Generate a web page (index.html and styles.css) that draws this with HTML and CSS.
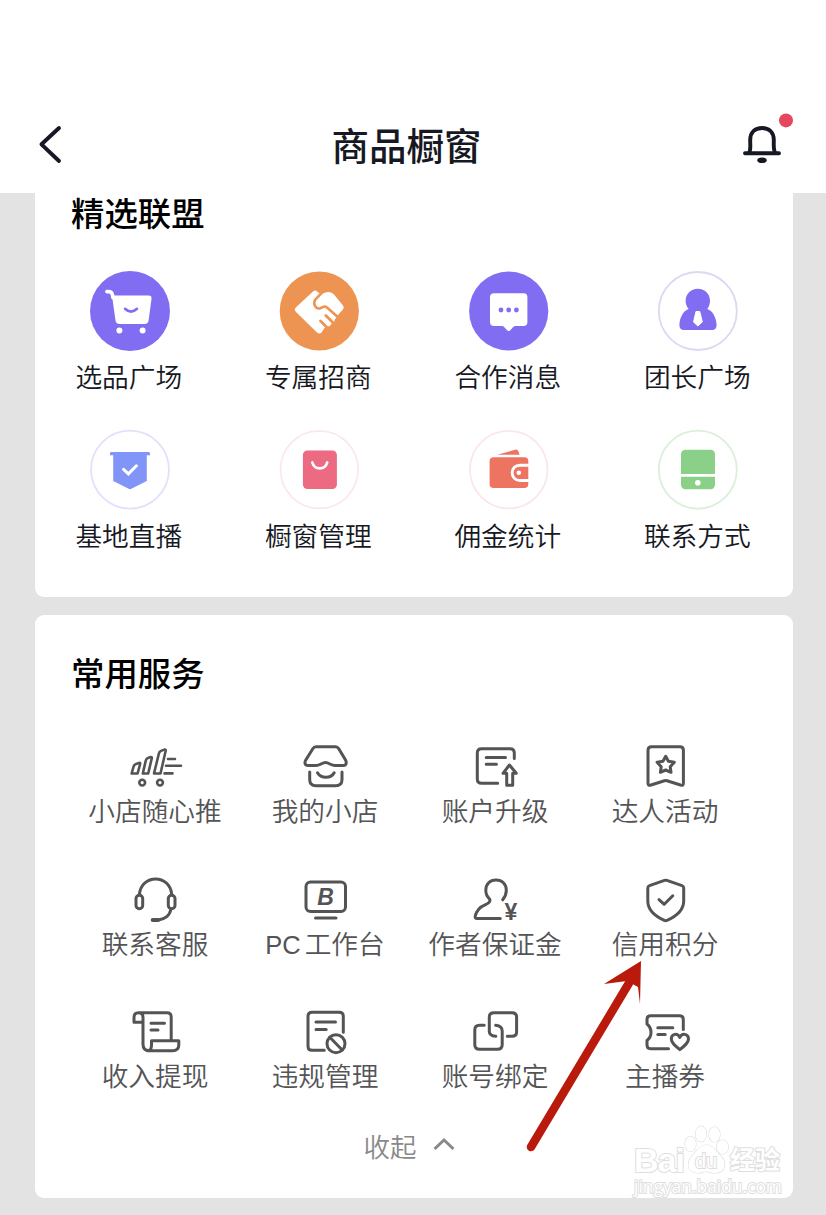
FILE: index.html
```html
<!DOCTYPE html>
<html lang="zh-CN">
<head>
<meta charset="UTF-8">
<meta name="viewport" content="width=device-width, initial-scale=1.0">
<title>商品橱窗</title>
<link rel="stylesheet" href="styles.css">
</head>
<body>

<!-- Header -->
<div class="header">
  <svg class="back" width="60" height="60" viewBox="20 114 60 60"><path d="M59 128L41.5 144.3L59 161"/></svg>
  <h1>商品橱窗</h1>
  <svg class="bell" width="60" height="60" viewBox="736 114 60 60">
    <path d="M745 153.3H779M749 153C751 150 750.2 147 750.2 140C750.2 132.5 755 128 762 128C769 128 773.8 132.5 773.8 140C773.8 147 773.3 150 775.3 153"/>
    <ellipse class="clapper" cx="762" cy="160.2" rx="4.7" ry="2.8"/>
    <circle class="dot" cx="786" cy="120.4" r="7"/>
  </svg>
</div>

<!-- Alliance -->
<div class="card alliance">
  <h2>精选联盟</h2>
  <div class="alliance-grid">
    <div class="item">
      <svg width="80" height="80" viewBox="0 0 80 80">
        <circle cx="40" cy="40" r="40" fill="#806df2"/>
        <path d="M17 20.6C21 20.4 22.4 21 23 26.5" fill="none" stroke="#fff" stroke-width="3.8" stroke-linecap="round"/>
        <path d="M22 24.6H58.5Q62 24.6 61.5 28L58.6 49.5Q58 53 54.5 53H30Q26 53 25.5 49.5Z" fill="#fff"/>
        <path d="M35 37.8Q41 43.4 47 37.8" fill="none" stroke="#806df2" stroke-width="2.6" stroke-linecap="round"/>
        <circle cx="29.4" cy="59.4" r="3" fill="#fff"/><circle cx="52.6" cy="59.4" r="3" fill="#fff"/>
      </svg>
      <span>选品广场</span>
    </div>
    <div class="item">
      <svg width="80" height="80" viewBox="0 0 80 80">
        <circle cx="40.3" cy="40" r="39.6" fill="#ee9452"/>
        <path d="M34 20.5Q36.5 18.5 38.5 21L42 23L47.5 21.3Q52 20 55 23.5L64 34.5Q65.5 37 63.5 39L58.5 44.5L55.5 49Q55.5 52.5 52 53Q51.5 55.5 48.5 55.5L45.5 57L42.5 61.5Q40.5 63.5 38 61.5L17 41Q14.5 38.5 17 36.2Z" fill="#fff"/>
        <path d="M44.5 20L36.2 28.7C34 32 36 38 40.5 37.5C44 37 45 33.5 48 36.5L60.5 47.5" fill="none" stroke="#ee9452" stroke-width="2.6"/>
        <path d="M41.5 50L49 57.5M46.8 44.6L55.5 53.3" fill="none" stroke="#ee9452" stroke-width="2.8" stroke-linecap="round"/>
      </svg>
      <span>专属招商</span>
    </div>
    <div class="item">
      <svg width="80" height="80" viewBox="0 0 80 80">
        <circle cx="39.7" cy="40" r="39.6" fill="#806df2"/>
        <path d="M25 22.3H54.5Q58.4 22.3 58.4 26.2V51Q58.4 55 54.5 55H46.5Q45 55 44 56.2L41 59.5Q39.7 60.7 38.4 59.5L35.3 56.2Q34.3 55 33 55H25Q21 55 21 51V26.2Q21 22.3 25 22.3Z" fill="#fff"/>
        <circle cx="32" cy="39" r="2.4" fill="#806df2"/><circle cx="39.7" cy="39" r="2.4" fill="#806df2"/><circle cx="47.4" cy="39" r="2.4" fill="#806df2"/>
      </svg>
      <span>合作消息</span>
    </div>
    <div class="item">
      <svg width="80" height="80" viewBox="0 0 80 80">
        <circle cx="39.8" cy="40" r="39" fill="#fff" stroke="#dcd8f2" stroke-width="1.8"/>
        <path d="M39.8 17.7C47 17.7 52 23 52 29.8C52 33 51 36 49.3 38C55 40 58.4 47 58.6 54Q58.6 59 54 59H26Q21.4 59 21.4 54C21.6 47 25 40 30.6 38C28.8 36 27.6 33 27.6 29.8C27.6 23 33 17.7 39.8 17.7Z" fill="#806df2"/>
        <path d="M38 40.5H41.8L44.3 51L39.9 55L35.5 51Z" fill="#fff" stroke="#fff" stroke-linejoin="round"/>
      </svg>
      <span>团长广场</span>
    </div>
    <div class="item">
      <svg width="80" height="80" viewBox="0 0 80 80">
        <circle cx="40" cy="39.6" r="39" fill="#fff" stroke="#dfe2fa" stroke-width="1.8"/>
        <path d="M20 25.2V23.5Q20 22 21.2 22H58.8Q60 22 60 23.5V25.2H56.8V50.9L40.8 59Q40 59.3 39.2 59L23.2 50.9V25.2Z" fill="#8195f8"/>
        <path d="M33.6 39.4L38.4 43.9L46.4 35.8" fill="none" stroke="#fff" stroke-width="3" stroke-linecap="round"/>
      </svg>
      <span>基地直播</span>
    </div>
    <div class="item">
      <svg width="80" height="80" viewBox="0 0 80 80">
        <circle cx="40.3" cy="39.6" r="38.8" fill="#fff" stroke="#fbe8ec" stroke-width="1.8"/>
        <rect x="23.9" y="20.5" width="34" height="38.5" rx="4.5" fill="#ec6a82"/>
        <path d="M33.3 32.5C35.5 40.3 46 40.3 48.2 32.5" fill="none" stroke="#fff" stroke-width="2.7" stroke-linecap="round"/>
      </svg>
      <span>橱窗管理</span>
    </div>
    <div class="item">
      <svg width="80" height="80" viewBox="0 0 80 80">
        <circle cx="39.7" cy="39.6" r="38.8" fill="#fff" stroke="#fbe6e8" stroke-width="1.8"/>
        <path d="M28.3 24.8L46 19.7Q48.5 19.1 49.5 21.5L50.6 24.8Z" fill="#ec7461"/>
        <rect x="20.6" y="27.3" width="38.7" height="30.6" rx="4" fill="#ec7461"/>
        <path d="M60 35.2H51C40.5 35.2 40.5 50.5 51 50.5H60" fill="none" stroke="#fff" stroke-width="2.9"/>
        <circle cx="49.8" cy="42.8" r="2.3" fill="#fff"/>
      </svg>
      <span>佣金统计</span>
    </div>
    <div class="item">
      <svg width="80" height="80" viewBox="0 0 80 80">
        <circle cx="39.8" cy="39.6" r="39" fill="#fff" stroke="#daf0da" stroke-width="1.8"/>
        <rect x="23" y="19.8" width="34" height="39.4" rx="4.5" fill="#8bd089"/>
        <path d="M22 45.3H58" stroke="#fff" stroke-width="2.8"/>
        <circle cx="39.8" cy="52.8" r="2.8" fill="#fff"/>
      </svg>
      <span>联系方式</span>
    </div>
  </div>
</div>

<!-- Common services -->
<div class="card services">
  <h2>常用服务</h2>
  <div class="service-grid">
    <div class="service">
      <svg width="60" height="50" viewBox="0 0 60 50" class="thin">
        <path d="M6.6 31.5L8.6 24.5Q9.2 22.6 11 22L14 20.9Q15.4 20.6 15.1 22L12.6 31.5ZM17.8 31.5L20.8 18.5Q21.3 16.6 23 16L25.6 15.1Q27 14.8 26.8 16.2L23.2 31.5ZM29 31.5L33.9 11.5Q34.4 9.6 36 8.9L39.4 7.6Q41 7.2 40.7 8.8L35.5 31.5Z"/>
        <path d="M43 17H50M41 23.7H56M39.5 31.4H47.5"/>
        <circle cx="17.2" cy="40.6" r="2.9"/><circle cx="35" cy="40.6" r="2.9"/>
      </svg>
      <span>小店随心推</span>
    </div>
    <div class="service">
      <svg width="60" height="50" viewBox="0 0 60 50">
        <path d="M21 4.8H40.5Q42.5 4.8 43.8 6.8L50.8 18.5Q52.5 23.6 47.5 23.6H40C36 23.6 34 20.6 30.6 20.6C27 20.6 25 23.6 21 23.6H14Q8.5 23.6 10.5 18.5L17.8 6.8Q19 4.8 21 4.8Z"/>
        <path d="M14.7 30V37.5Q14.7 43.8 21 43.8H40.5Q47 43.8 47 37.5V30M22.5 30.8C26 36.8 36 36.8 39.2 30.8"/>
      </svg>
      <span>我的小店</span>
    </div>
    <div class="service">
      <svg width="60" height="50" viewBox="0 0 60 50">
        <path d="M32.7 41.3H16.5Q12.3 41.3 12.3 37V11Q12.3 6.8 16.5 6.8H45Q49.3 6.8 49.3 11V16.5M21.2 15.6H40.5M21.2 22.3H31.4"/>
        <path d="M44.4 23L38 31.3H41.7V43.2H47.7V31.3H51.3Z"/>
      </svg>
      <span>账户升级</span>
    </div>
    <div class="service">
      <svg width="60" height="50" viewBox="0 0 60 50">
        <path d="M16.5 4.8H45Q48.4 4.8 48.4 8.2V41Q48.4 44.3 45.5 43L32 38.8Q30.7 38.4 29.4 38.8L16 43Q13 44.3 13 41V8.2Q13 4.8 16.5 4.8Z"/>
        <path d="M30.7 14.3L33.4 19.2L39.3 20.2L35.2 24.7L36 30.3L30.7 28L25.4 30.3L26.2 24.7L22.1 20.2L28 19.2Z"/>
      </svg>
      <span>达人活动</span>
    </div>
    <div class="service">
      <svg width="60" height="50" viewBox="0 0 60 50">
        <path d="M14.4 19.5C16 -1.3 45.2 -1.3 46.7 19.5M46 34C44.5 41 40.5 43.5 33.5 45"/>
        <path d="M27.7 45H33" class="mic"/>
        <rect x="11" y="20.3" width="6.7" height="13.4" rx="3.2"/><rect x="43.3" y="20.3" width="6.7" height="13.4" rx="3.2"/>
      </svg>
      <span>联系客服</span>
    </div>
    <div class="service">
      <svg width="60" height="50" viewBox="0 0 60 50">
        <rect x="11" y="7" width="39.5" height="29.4" rx="4.5"/>
        <path d="M20.5 43H41"/>
        <text x="30.5" y="29.6">B</text>
      </svg>
      <span><span class="latin">PC</span>工作台</span>
    </div>
    <div class="service">
      <svg width="60" height="50" viewBox="0 0 60 50">
        <path d="M37.7 24.8C40 22 41.3 19 41.3 15.5C41.3 9 37 4.9 31 4.9C25 4.9 20.8 9 20.8 15.5C20.8 19 22.5 22 24.6 24C26 27 23 28.5 20 29.8C14.5 32 11.5 36 10.2 41Q9.7 43.4 12 43.4H35.3"/>
        <text class="yen" x="46" y="45.3">¥</text>
      </svg>
      <span>作者保证金</span>
    </div>
    <div class="service">
      <svg width="60" height="50" viewBox="0 0 60 50">
        <path d="M29.5 5.4Q30.7 5 31.9 5.4L47 10.6Q48.7 11.2 48.7 13V26C48.7 34 43.5 40.3 32 45.4Q30.7 46 29.4 45.4C18 40.3 12.8 34 12.8 26V13Q12.8 11.2 14.5 10.6Z"/>
        <path d="M24 24.6L29.2 29.3L37.8 20.8"/>
      </svg>
      <span>信用积分</span>
    </div>
    <div class="service">
      <svg width="60" height="50" viewBox="0 0 60 50">
        <path d="M17.5 15.2H9V10.5Q9 5.7 13.5 5.7H42Q46.2 5.7 46.2 10V32.5M13.5 5.7Q18 5.7 18 10.5V37Q18 43.7 24 43.7H47.5Q53.8 43.7 53.8 38V33.8H26.5V38Q26.5 43.7 22.5 43.7M26 16.3H39.5M26 23H33"/>
      </svg>
      <span>收入提现</span>
    </div>
    <div class="service">
      <svg width="60" height="50" viewBox="0 0 60 50">
        <path d="M29.3 43.3H17Q13 43.3 13 39.3V9.3Q13 5.3 17 5.3H44.3Q48.3 5.3 48.3 9.3V25.3M21 15H40.5M21 22.6H31.2"/>
        <circle cx="41" cy="36.7" r="9"/><path d="M34.8 30.3L47.2 43"/>
      </svg>
      <span>违规管理</span>
    </div>
    <div class="service">
      <svg width="60" height="50" viewBox="0 0 60 50">
        <path d="M42.3 29.3H47Q51.6 29.3 51.6 25V10Q51.6 5.7 47 5.7H29Q24.3 5.7 24.3 10V24.5Q24.3 28.7 30.8 29.3"/>
        <path d="M19.2 18.3H14.5Q9.8 18.3 9.8 23V37.7Q9.8 42.2 14.5 42.2H32.5Q37.2 42.2 37.2 37.7V24Q37.2 19 30.7 18.3"/>
      </svg>
      <span>账号绑定</span>
    </div>
    <div class="service">
      <svg width="60" height="50" viewBox="0 0 60 50">
        <path d="M33.5 41.7H15.5Q12 41.7 12 38V33.5C14.5 31.5 16 29 16 25.5C16 22 14.5 19 12 17V12.5Q12 8.8 15.5 8.8H44.5Q48.3 8.8 48.3 12.5V22.5M22.8 20.8H37.8M22.8 27.5H30.2"/>
        <path d="M44.8 42.6C40 38.8 36.3 35.8 36.3 32C36.3 26.5 42.5 25.7 44.8 30.4C47 25.7 53.5 26.5 53.5 32C53.5 35.8 49.6 38.8 44.8 42.6Z"/>
      </svg>
      <span>主播券</span>
    </div>
  </div>
  <div class="collapse">
    <span>收起</span>
    <svg width="24" height="16" viewBox="0 0 24 16"><path d="M2.5 13L12 4L21.5 13"/></svg>
  </div>
</div>

<!-- Pointer to the credit score entry -->
<svg class="pointer" width="130" height="200" viewBox="520 956 130 200">
  <path d="M531 1147L629 983" stroke="#b91a0c" stroke-width="8.5" stroke-linecap="round"/>
  <path d="M641 961L604 984L627 981L638 987L640 1004Z" fill="#b91a0c"/>
</svg>

<!-- Watermark -->
<div class="watermark">
  <div class="brand">
    <span class="bai">Bai</span>
    <span class="paw">
      <svg width="46" height="50" viewBox="0 0 46 50">
        <ellipse cx="6.5" cy="19" rx="5.5" ry="7.5"/><ellipse cx="17" cy="9" rx="5.5" ry="7.8"/>
        <ellipse cx="30.5" cy="9.5" rx="5.5" ry="7.5"/><ellipse cx="38.5" cy="22" rx="5.8" ry="7"/>
        <path d="M22.5 20C29 20 32 26 36 30C44 38 41 48 31 48C27 48 25 46.5 22 46.5C19 46.5 17 48 13 48C3 47 2 37 9 30C13 26 16 20 22.5 20Z"/>
      </svg>
      <span class="du">du</span>
    </span>
    <span class="jy">经验</span>
  </div>
  <div class="site">jingyan.baidu.com</div>
</div>

</body>
</html>
```
FILE: styles.css
```css
* {
  box-sizing: border-box;
}
body {
  position: relative;
  margin: 0;
  min-height: 1215px;
  background-color: #e3e3e3;
  font-family: "Noto Sans CJK SC", sans-serif;
  color: #161823;
}
svg {
  display: block;
  flex: none;
  overflow: visible;
}
h1, h2 {
  margin: 0;
  font-weight: 500;
}

/* header */
.header {
  display: flex;
  justify-content: space-between;
  height: 193px;
  padding: 114px 30px 0 20px;
  background-color: #fff;
}
.header h1 {
  padding-right: 3px;
  font-size: 37.5px;
  line-height: 59px;
}
.back, .bell {
  fill: none;
  stroke: #161823;
  stroke-width: 3.9;
  stroke-linecap: round;
  stroke-linejoin: round;
}
.bell .clapper {
  fill: #161823;
  stroke: none;
}
.bell .dot {
  fill: #e5475f;
  stroke: none;
}

/* cards */
.card {
  width: 758px;
  margin-left: 35px;
  background-color: #fff;
}
.card h2 {
  padding-left: 36px;
  font-size: 33.4px;
  line-height: 38px;
  color: #000;
}
.alliance {
  height: 404px;
  border-radius: 0 0 9px 9px;
}
.alliance-grid {
  display: grid;
  grid-template-columns: repeat(4, 1fr);
  grid-auto-rows: 158.5px;
  padding-top: 40px;
}
.item {
  display: flex;
  flex-direction: column;
  align-items: center;
}
.item span {
  margin-top: 5px;
  padding-right: 2px;
  font-size: 26.7px;
  font-weight: 350;
  line-height: 40px;
}

.services {
  height: 583px;
  margin-top: 18px;
  padding-top: 38px;
  border-radius: 9px;
}
.service-grid {
  display: grid;
  grid-template-columns: repeat(4, 170px);
  grid-auto-rows: 132.5px;
  padding: 51px 0 0 35px;
}
.service {
  display: flex;
  flex-direction: column;
  align-items: center;
}
.service svg {
  fill: none;
  stroke: #545456;
  stroke-width: 3;
  stroke-linecap: round;
  stroke-linejoin: round;
}
.service .thin {
  stroke-width: 2.6;
}
.service .mic {
  stroke-width: 4;
}
.service text {
  fill: #545456;
  stroke: none;
  font: italic bold 23px "Liberation Sans", sans-serif;
  text-anchor: middle;
}
.service .yen {
  font: bold 23px "Liberation Sans", sans-serif;
}
.service > span {
  margin-top: -1px;
  font-size: 26.7px;
  font-weight: 350;
  line-height: 38px;
  color: #545456;
}
.latin {
  margin-right: 4px;
  font-family: "Liberation Sans", sans-serif;
  font-size: 25.5px;
}
.collapse {
  display: flex;
  justify-content: center;
  align-items: center;
  gap: 15px;
  padding-right: 9px;
  margin-top: -14px;
  font-size: 26.5px;
  font-weight: 350;
  line-height: 40px;
  color: #898989;
}
.collapse svg {
  margin-top: -3px;
  fill: none;
  stroke: #898989;
  stroke-width: 3;
}

/* overlays */
.pointer {
  position: absolute;
  left: 520px;
  top: 956px;
  fill: none;
}
.watermark {
  position: absolute;
  left: 634px;
  top: 1125px;
  width: 150px;
  color: #fff;
  font-family: "Liberation Sans", "Noto Sans CJK SC", sans-serif;
  -webkit-text-stroke: 2px #dedede;
  paint-order: stroke fill;
}
.brand {
  display: flex;
  align-items: flex-start;
  height: 51px;
}
.bai {
  width: 50px;
  padding-top: 18px;
  font-size: 34px;
  font-weight: bold;
  line-height: 34px;
  letter-spacing: -1px;
}
.paw {
  position: relative;
  width: 46px;
}
.paw svg {
  fill: #fff;
  stroke: #dedede;
  stroke-width: 1.2;
}
.du {
  position: absolute;
  left: 11px;
  top: 23px;
  font-size: 20px;
  line-height: 26px;
}
.jy {
  padding-top: 18px;
  font-size: 25px;
  font-weight: bold;
  line-height: 34px;
}
.site {
  padding-top: 1px;
  font-family: "Open Sans", sans-serif;
  font-size: 17.4px;
  line-height: 19px;
  white-space: nowrap;
}
```
